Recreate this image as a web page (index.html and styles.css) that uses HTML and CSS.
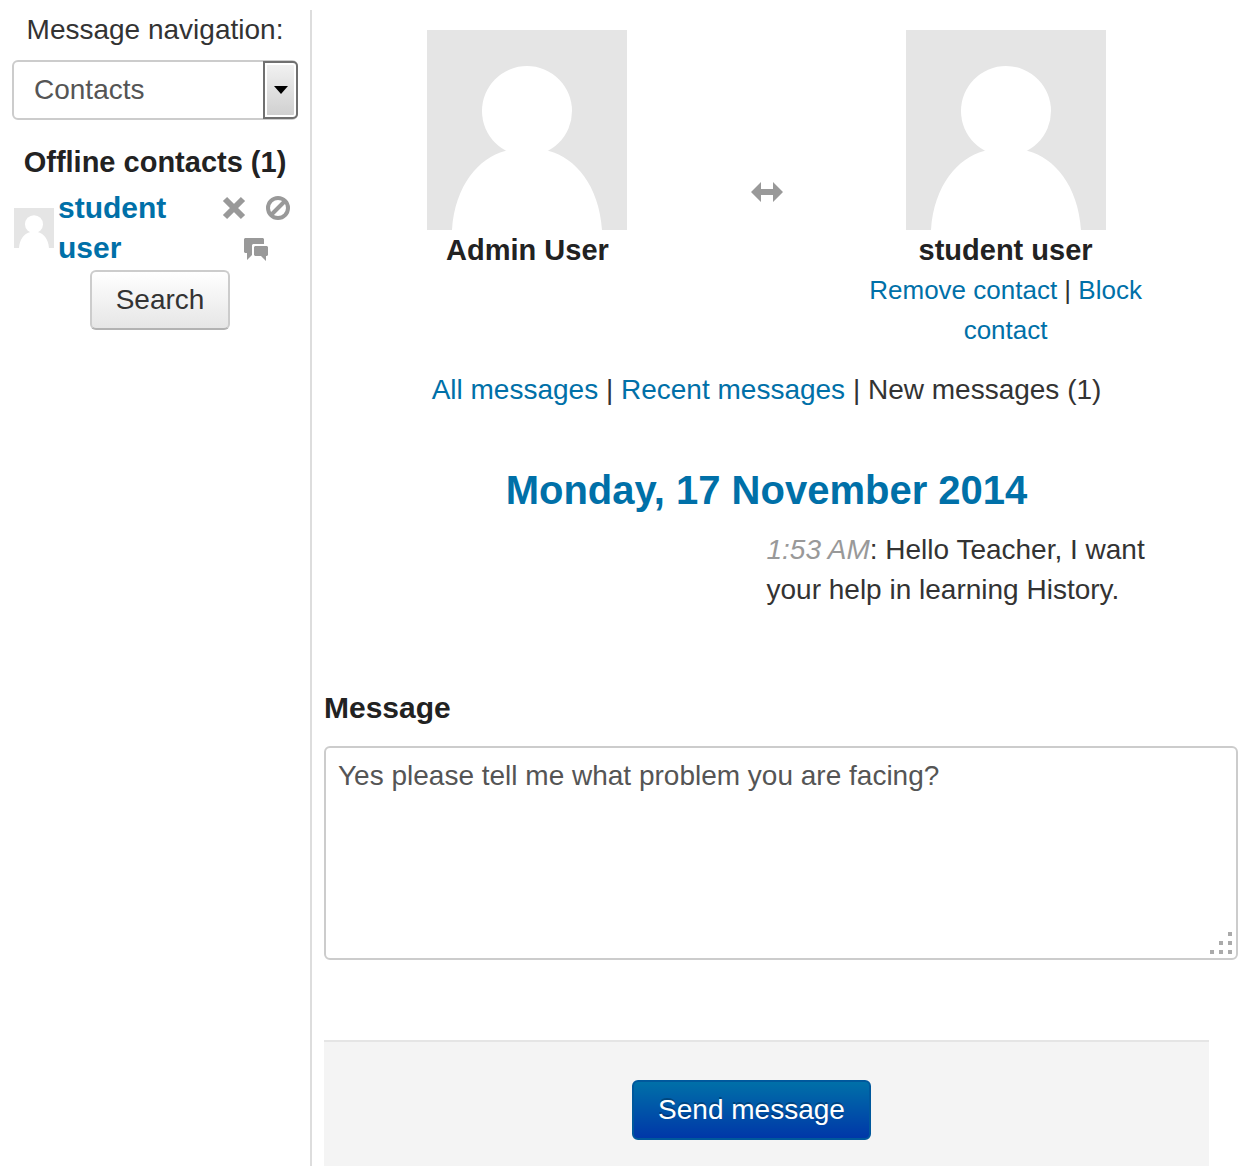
FILE: index.html
```html
<!DOCTYPE html>
<html lang="en">
<head>
<meta charset="utf-8">
<meta name="viewport" content="width=device-width, initial-scale=1">
<title>Messages</title>
<link rel="stylesheet" href="styles.css">
</head>
<body>
<svg class="defs" aria-hidden="true">
  <symbol id="avatar" viewBox="0 0 200 200">
    <path fill="#e5e5e5" d="M0 0h200v200H0z"/>
    <circle cx="100" cy="81" r="45" fill="#fff"/>
    <path fill="#fff" d="M25 200C28 155 52 128 78 121Q100 113 122 121C148 128 172 155 175 200z"/>
  </symbol>
</svg>
<div class="page">
  <aside class="sidebar">
    <label class="nav-label" for="nav">Message navigation:</label>
    <div class="select-wrap">
      <select id="nav" class="nav-select"><option>Contacts</option></select>
      <span class="select-button"><svg width="14" height="8" viewBox="0 0 14 8" aria-hidden="true"><path d="M0 0h14L7 8z"/></svg></span>
    </div>
    <h2 class="group-title">Offline contacts (1)</h2>
    <div class="contact">
      <svg class="contact-avatar" aria-hidden="true"><use href="#avatar"/></svg>
      <a class="contact-name" href="#">student user</a>
      <div class="contact-actions">
        <a class="action" href="#" aria-label="Remove contact"><svg width="24" height="24" viewBox="0 0 24 24"><path d="M3 3l18 18M21 3L3 21" stroke="#999" stroke-width="6"/></svg></a>
        <a class="action" href="#" aria-label="Block contact"><svg width="24" height="24" viewBox="0 0 24 24"><circle cx="12" cy="12" r="10" fill="none" stroke="#999" stroke-width="4"/><path d="M5 19L19 5" stroke="#999" stroke-width="4"/></svg></a>
        <a class="action" href="#" aria-label="Message history"><svg width="24" height="28" viewBox="0 0 24 28"><path fill="#999" d="M1 4h18l1 1v5H9L8 11v10l-5 5v-7H1l-1-1V5zM11 12h12l1 1v8l-1 1h-1v5l-5-5h-6l-1-1v-8z"/></svg></a>
      </div>
    </div>
    <button class="btn search" type="button">Search</button>
  </aside>
  <main class="main">
    <section class="conversation">
      <div class="people">
        <div class="person">
          <svg class="person-avatar" aria-hidden="true"><use href="#avatar"/></svg>
          <strong class="person-name">Admin User</strong>
        </div>
        <svg class="exchange" width="32" height="20" viewBox="0 0 32 20" aria-hidden="true"><path fill="#999" d="M0 10L10 0v7h12V0l10 10-10 10v-7H10v7z"/></svg>
        <div class="person">
          <svg class="person-avatar" aria-hidden="true"><use href="#avatar"/></svg>
          <strong class="person-name">student user</strong>
          <div class="person-links"><a href="#">Remove contact</a> | <a href="#">Block contact</a></div>
        </div>
      </div>
      <nav class="filters"><a href="#">All messages</a> | <a href="#">Recent messages</a> | New messages (1)</nav>
      <h1 class="date">Monday, 17 November 2014</h1>
      <p class="message"><i class="time">1:53 AM</i>: Hello Teacher, I want your help in learning History.</p>
    </section>
    <form class="compose">
      <label class="compose-label" for="message">Message</label>
      <div class="textarea-wrap">
        <textarea id="message" class="textarea">Yes please tell me what problem you are facing?</textarea>
        <svg class="grip" width="24" height="24" viewBox="0 0 24 24" aria-hidden="true"><path fill="#aaa" d="M18 0h4v4h-4zM9 9h4v4H9zM18 9h4v4h-4zM0 18h4v4H0zM9 18h4v4H9zM18 18h4v4h-4z"/></svg>
      </div>
      <div class="form-actions"><button class="btn primary" type="button">Send message</button></div>
    </form>
  </main>
</div>
</body>
</html>
```
FILE: styles.css
```css
* { box-sizing: border-box; }
body {
  margin: 0;
  background: #fff;
  color: #333;
  font: 28px/40px "Liberation Sans", Arial, sans-serif;
}
a { color: #0070a8; text-decoration: none; }
h1, h2, p { margin: 0; }
svg { display: block; }
.defs { position: absolute; width: 0; height: 0; }

.page { display: flex; min-height: 100vh; padding-top: 10px; }

.sidebar {
  flex: 0 0 312px;
  padding: 0 12px;
  border-right: 2px solid #ddd;
  text-align: center;
}
.nav-label { display: block; }
.select-wrap { position: relative; margin: 10px 0 22px; }
.nav-select {
  display: block;
  width: 100%;
  height: 60px;
  padding: 0 44px 0 20px;
  border: 2px solid #ccc;
  border-radius: 6px;
  background: #fff;
  color: #555;
  font: inherit;
  appearance: none;
}
.select-button {
  position: absolute;
  top: 1px;
  right: 0;
  bottom: 1px;
  display: grid;
  place-items: center;
  width: 35px;
  border: 2px solid #707070;
  border-radius: 0 5px 5px 0;
  background: linear-gradient(#f2f2f2, #cfcfcf);
  box-shadow: inset 0 0 0 2px #fff;
  pointer-events: none;
}
.group-title { font-size: 29px; line-height: 40px; color: #222; white-space: nowrap; }
.contact { display: flex; align-items: center; gap: 4px; margin: 6px 0 2px 2px; }
.contact-avatar { flex: none; width: 40px; height: 40px; }
.contact-name { flex: 1; font-size: 30px; font-weight: bold; text-align: left; }
.contact-actions { display: flex; flex-wrap: wrap; justify-content: center; column-gap: 20px; width: 84px; }
.action { display: grid; place-items: center; width: 24px; height: 40px; }

.btn {
  height: 60px;
  padding: 0 24px;
  border: 2px solid #ccc;
  border-bottom-color: #b3b3b3;
  border-radius: 6px;
  background: linear-gradient(#fff, #e6e6e6);
  color: #333;
  font: inherit;
}
.search { margin-left: 10px; }
.primary {
  border-color: #00589c;
  background: linear-gradient(#0070a8, #0037a8);
  color: #fff;
  text-shadow: 0 -2px 0 rgba(0, 0, 0, .25);
}

.main { flex: 1; display: flex; flex-direction: column; min-width: 0; padding: 20px 10px 0 12px; }
.conversation { margin-right: 29px; padding: 0 60px; }
.people { display: grid; grid-template-columns: 3fr 2fr 3fr; justify-items: center; text-align: center; }
.person-avatar { width: 200px; height: 200px; margin: 0 auto; }
.person-name { display: block; font-size: 29px; color: #222; }
.person-links { font-size: 26px; }
.exchange { margin-top: 152px; }
.filters { margin-top: 20px; text-align: center; }
.date { margin: 50px 0 10px; font-size: 40px; line-height: 60px; color: #0070a8; text-align: center; }
.message { margin-left: 50%; }
.time { color: #999; }

.compose { flex: 1; display: flex; flex-direction: column; margin-top: 78px; }
.compose-label { font-size: 30px; color: #222; font-weight: bold; }
.textarea-wrap { position: relative; margin: 18px 0 80px; }
.textarea {
  display: block;
  width: 100%;
  height: 214px;
  padding: 8px 12px;
  border: 2px solid #ccc;
  border-radius: 6px;
  color: #555;
  font: inherit;
  resize: none;
}
.grip { position: absolute; right: 4px; bottom: 4px; pointer-events: none; }
.form-actions {
  flex: 1;
  margin-right: 29px;
  padding: 38px 30px 26px 0;
  border-top: 2px solid #e5e5e5;
  background: #f4f4f4;
  text-align: center;
}
```
